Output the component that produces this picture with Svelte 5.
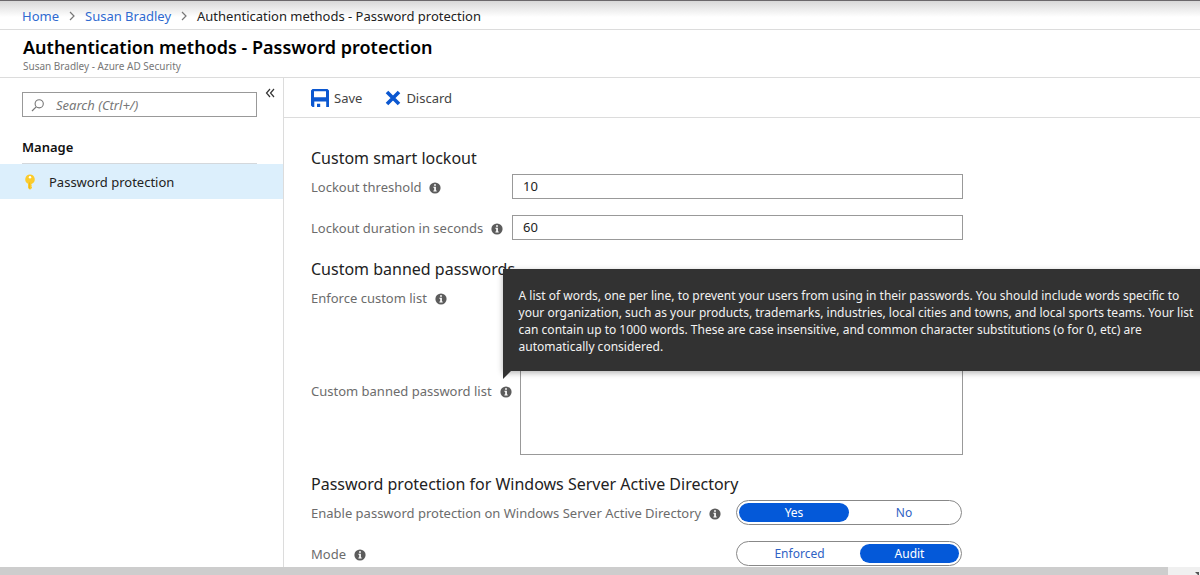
<script>
  let threshold = $state('10');
  let duration = $state('60');
  let banned = $state('');
  let enabled = $state('Yes');
  let mode = $state('Audit');
</script>

{#snippet info()}
  <svg class="info" viewBox="0 0 12 12" aria-hidden="true">
    <circle cx="6" cy="6" r="5.6" fill="#5c5c5c" />
    <path d="M5.1 2.2h1.8v1.5H5.1zM4.4 4.7h2.5v3.8h.8v1H4.4v-1h.8V5.7h-.8z" fill="#fff" />
  </svg>
{/snippet}

{#snippet chevron()}
  <svg class="chevron" viewBox="0 0 6 10" aria-hidden="true">
    <path d="M1 1l4 4-4 4" fill="none" stroke="#777" stroke-width="1.2" />
  </svg>
{/snippet}

<div class="page">
  <nav class="crumbs">
    <a href="#home">Home</a>
    {@render chevron()}
    <a href="#tenant">Susan Bradley</a>
    {@render chevron()}
    <span>Authentication methods - Password protection</span>
  </nav>

  <header>
    <h1>Authentication methods - Password protection</h1>
    <p>Susan Bradley - Azure AD Security</p>
  </header>

  <div class="body">
    <aside>
      <div class="search-row">
        <label class="search">
          <svg viewBox="0 0 14 14" aria-hidden="true">
            <circle cx="8.2" cy="5.8" r="4.1" fill="none" stroke="#777" stroke-width="1.1" />
            <path d="M5.2 8.800L1 13" stroke="#777" stroke-width="1.2" />
          </svg>
          <input type="search" placeholder="Search (Ctrl+/)" aria-label="Search" />
        </label>
        <button class="collapse" aria-label="Collapse">
          <svg viewBox="0 0 10 10" aria-hidden="true">
            <path d="M5 1L1.500 5 5 9M9 1L5.500 5 9 9" fill="none" stroke="#333" stroke-width="1.2" />
          </svg>
        </button>
      </div>
      <h2>Manage</h2>
      <a class="item" href="#password-protection">
        <svg viewBox="0 0 12 16" aria-hidden="true">
          <path d="M6 .5a4.900 4.900 0 0 0-2 9.300V14l2 1.800L8 14v-1l-.9-.9.9-.9-.9-.9.9-.5A4.900 4.900 0 0 0 6 .5z" fill="#fbcb2c" />
          <circle cx="6" cy="3.300" r="1.200" fill="#fff" />
          <path d="M5.500 8.500v6" stroke="#e8b418" stroke-width=".8" />
        </svg>
        <span>Password protection</span>
      </a>
    </aside>

    <main>
      <div class="toolbar">
        <button>
          <svg class="save" viewBox="0 0 18 18" aria-hidden="true">
            <path fill="#0b57d0" fill-rule="evenodd" d="M1.500 0h15L18 1.500V18h-2.800v-5.500H3.300V18H1.500L0 16.500v-15zM3 2.300v5.900h12V2.300zM6 14.800h3.200V18H6z" />
          </svg>
          Save
        </button>
        <button>
          <svg class="discard" viewBox="0 0 16 16" aria-hidden="true">
            <path d="M2 2l12 12M14 2L2 14" stroke="#0b57d0" stroke-width="3.600" />
          </svg>
          Discard
        </button>
      </div>

      <form>
        <section>
          <h3>Custom smart lockout</h3>
          <div class="row">
            <label for="threshold">Lockout threshold {@render info()}</label>
            <input id="threshold" type="text" bind:value={threshold} />
          </div>
          <div class="row">
            <label for="duration">Lockout duration in seconds {@render info()}</label>
            <input id="duration" type="text" bind:value={duration} />
          </div>
        </section>

        <section>
          <h3>Custom banned passwords</h3>
          <div class="row">
            <span class="label">Enforce custom list {@render info()}</span>
          </div>
          <div class="row">
            <label for="banned">
              Custom banned password list
              <span class="anchor">
                {@render info()}
                <span class="tip" role="tooltip">
                  A list of words, one per line, to prevent your users from using in their passwords. You should include words specific to<br />
                  your organization, such as your products, trademarks, industries, local cities and towns, and local sports teams. Your list<br />
                  can contain up to 1000 words. These are case insensitive, and common character substitutions (o for 0, etc) are<br />
                  automatically considered.
                </span>
              </span>
            </label>
            <textarea id="banned" bind:value={banned}></textarea>
          </div>
        </section>

        <section>
          <h3>Password protection for Windows Server Active Directory</h3>
          <div class="row">
            <span class="label">Enable password protection on Windows Server Active Directory {@render info()}</span>
            <div class="toggle even" role="group" aria-label="Enable password protection on Windows Server Active Directory">
              {#each ['Yes', 'No'] as o}
                <button type="button" class:on={enabled === o} aria-pressed={enabled === o} onclick={() => (enabled = o)}>{o}</button>
              {/each}
            </div>
          </div>
          <div class="row">
            <span class="label">Mode {@render info()}</span>
            <div class="toggle wide-first" role="group" aria-label="Mode">
              {#each ['Enforced', 'Audit'] as o}
                <button type="button" class:on={mode === o} aria-pressed={mode === o} onclick={() => (mode = o)}>{o}</button>
              {/each}
            </div>
          </div>
        </section>
      </form>
    </main>
  </div>

  <div class="scroll"><div class="thumb"></div><svg viewBox="0 0 6 6" aria-hidden="true"><path d="M1 1h4v4z" fill="#555" /></svg></div>
</div>

<style>
  :global(body) { background: #fff; overflow: hidden; }
  .page {
    display: flex;
    flex-direction: column;
    height: 100vh;
    overflow: hidden;
    box-sizing: border-box;
    border-top: 1px solid #6b686b;
    font: 13px/18px "Noto Sans", "Open Sans", sans-serif;
    color: #222;
  }
  .page :global(*) { box-sizing: border-box; }
  button, input, textarea { font: inherit; color: inherit; }
  button { border: 0; background: none; padding: 0; cursor: pointer; }
  svg { flex: none; display: block; }
  h1, h2, h3, p { margin: 0; }

  .crumbs {
    display: flex;
    align-items: center;
    gap: 10px;
    height: 29px;
    flex: none;
    padding: 2px 22px 0;
    border-bottom: 1px solid #dcdcdc;
    background: linear-gradient(#d8d8d8, #fff 16px);
  }
  .crumbs a { color: #2f6ad0; text-decoration: none; }
  .chevron { width: 6px; height: 10px; }

  header {
    flex: none;
    height: 48px;
    padding: 5px 23px 0;
    border-bottom: 1px solid #dcdcdc;
  }
  h1 { font-size: 18px; line-height: 24px; font-weight: 600; color: #000; }
  header p { font-size: 10px; line-height: 14px; color: #777; }

  .body { display: flex; flex: 1; min-height: 0; }
  aside { width: 284px; flex: none; border-right: 1px solid #dcdcdc; }
  .search-row { display: flex; align-items: flex-start; gap: 8px; padding: 14px 8px 0 22px; }
  .search {
    display: flex;
    align-items: center;
    flex: 1;
    gap: 11px;
    height: 25px;
    padding: 0 8px;
    border: 1px solid #999;
  }
  .search svg { width: 14px; height: 14px; }
  .search input { flex: 1; min-width: 0; border: 0; padding: 0; outline: 0; background: none; }
  .search input::placeholder { font-style: italic; color: #777; opacity: 1; }
  .collapse svg { width: 10px; height: 10px; }
  .collapse { margin-top: -4px; }
  h2 {
    margin: 21px 26px 0 22px;
    padding-bottom: 7px;
    border-bottom: 1px solid #d4d8dc;
    font-size: 13px;
    line-height: 18px;
    font-weight: 600;
    color: #111;
  }
  .item {
    display: flex;
    align-items: center;
    gap: 13px;
    height: 35px;
    padding: 0 24px;
    background: #dceffc;
    color: #222;
    text-decoration: none;
  }
  .item svg { width: 12px; height: 16px; }

  main { flex: 1; min-width: 0; }
  .toolbar {
    display: flex;
    align-items: center;
    gap: 23px;
    height: 40px;
    padding: 0 27px;
    border-bottom: 1px solid #dcdcdc;
  }
  .toolbar button { display: flex; align-items: center; gap: 5px; color: #444; }
  .save { width: 18px; height: 18px; }
  .discard { width: 16px; height: 16px; }

  form { max-width: 706px; padding: 28px 27px 0; }
  section { display: flex; flex-direction: column; margin-bottom: 17px; }
  h3 { margin-bottom: 4px; font-size: 16px; line-height: 24px; font-weight: 400; color: #222; }
  .row { display: flex; align-items: center; min-height: 25px; }
  .row + .row { margin-top: 16px; }
  .row label, .label { display: flex; align-items: center; gap: 8px; flex: none; color: #6c6c6c; white-space: nowrap; }
  .row label { width: 201px; }
  .info { width: 12px; height: 12px; margin-top: 3px; }
  .row input, textarea {
    flex: 1;
    min-width: 0;
    height: 25px;
    padding: 0 10px 2px;
    border: 1px solid #999;
    background: #fff;
  }
  textarea { height: 129px; margin-left: 8px; resize: none; }

  .toggle {
    display: grid;
    width: 226px;
    height: 25px;
    margin: 0 1px 0 auto;
    padding: 2px;
    border: 1px solid #888;
    border-radius: 13px;
  }
  .even { grid-template-columns: 1fr 1fr; }
  .wide-first { grid-template-columns: 11fr 9fr; }
  .toggle button { border-radius: 10px; color: #2f62c4; font-size: 12px; line-height: 19px; }
  .toggle .on { background: #0459d9; color: #fff; }

  .anchor { position: relative; }
  .tip {
    position: absolute;
    left: 3px;
    bottom: 27px;
    z-index: 1;
    width: 716px;
    padding: 18px 16px 16px;
    background: #323232;
    color: #f2f2f2;
    font-size: 12px;
    line-height: 17px;
    box-shadow: 0 2px 6px rgba(0, 0, 0, 0.3);
  }
  .tip::after {
    content: "";
    position: absolute;
    left: 0;
    top: 100%;
    border-top: 8px solid #323232;
    border-right: 8px solid transparent;
  }

  .scroll { position: relative; z-index: 2; display: flex; justify-content: space-between; flex: none; height: 8px; background: #f0f0f0; }
  .thumb { width: 97.33%; background: #cdcdcd; }
  .scroll svg { width: 6px; height: 6px; margin-top: 4px; }
</style>
